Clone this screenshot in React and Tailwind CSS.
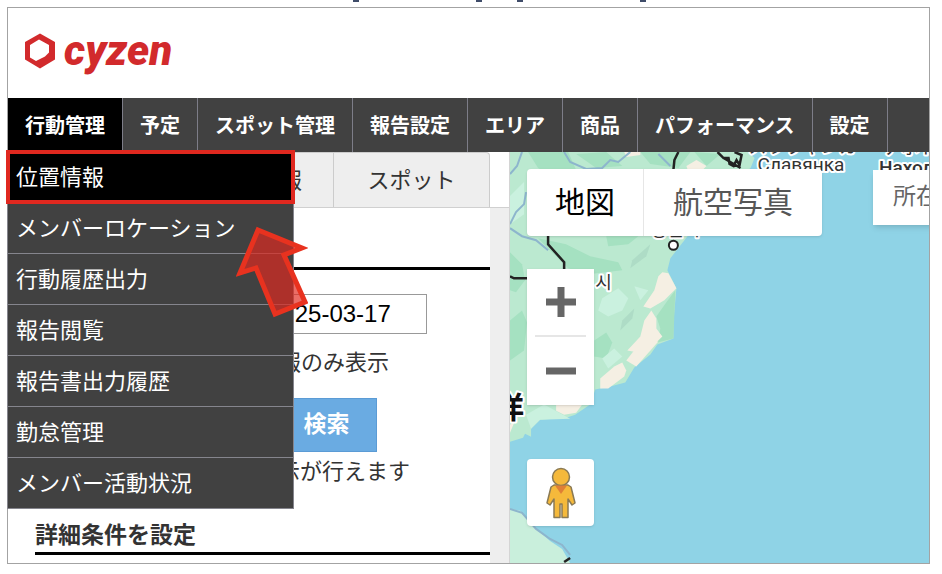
import clsx from 'clsx';

const navItems = ['行動管理', '予定', 'スポット管理', '報告設定', 'エリア', '商品', 'パフォーマンス', '設定'];

const menuItems = [
  '位置情報',
  'メンバーロケーション',
  '行動履歴出力',
  '報告閲覧',
  '報告書出力履歴',
  '勤怠管理',
  'メンバー活動状況',
];

function Logo() {
  return (
    <a href="#" className="flex items-center gap-2 pb-1 text-[#d22a2c]">
      <svg viewBox="0 0 32 36" className="h-9 w-8" aria-hidden="true">
        <path
          fill="currentColor"
          fillRule="evenodd"
          d="M16 0.5 L31 9 V26.5 L16 35.5 L1 26.5 V9 Z M15 6.5 L6 12 V24.5 L12 28 L21 23.5 L25 19.5 V12 Z"
        />
      </svg>
      <span className="font-['Roboto'] font-black italic text-[42px] leading-none">cyzen</span>
    </a>
  );
}

function GlobalNav() {
  return (
    <nav className="flex h-[54px] bg-[#414141]">
      {navItems.map((item, i) => (
        <a
          key={item}
          href="#"
          className={clsx(
            'flex shrink-0 items-center border-r border-[#7d7d88] px-[17px] pt-0.5 text-xl font-bold text-white',
            i === 0 && 'bg-black',
          )}
        >
          {item}
        </a>
      ))}
    </nav>
  );
}

function DropdownMenu() {
  return (
    <ul className="absolute -left-px top-0 z-10 w-[287px] border-x border-[#85858d] bg-[#414141] text-[22px] text-white">
      {menuItems.map((item, i) => (
        <li key={item} className="border-b border-[#85858d]">
          <a
            href="#"
            className={clsx(
              'flex h-[50px] items-center px-2',
              i === 0 && 'bg-black outline-4 -outline-offset-2 outline-[#e0281f]',
            )}
          >
            {item}
          </a>
        </li>
      ))}
    </ul>
  );
}

function Arrow() {
  return (
    <svg viewBox="0 0 72 92" className="absolute left-[228px] top-[74px] z-20 h-[92px] w-[72px]" aria-hidden="true">
      <path
        d="M22 4 L66 22 L48 29 L69 76 L39 88 L20 42 L4 47 Z"
        fill="#e0281f"
        fillOpacity="0.68"
        stroke="#e8321f"
        strokeWidth="5"
      />
    </svg>
  );
}

function SearchPanel() {
  return (
    <section className="w-[502px] shrink-0 border-r border-[#d4d4d4] text-[22px] text-[#333]">
      <div className="flex h-[56px] justify-end border-b border-[#d0d0d0] pr-[19px]">
        <button className="w-[151px] border-x border-t border-[#ccc] bg-[#eee] pl-24 text-left">報</button>
        <button className="w-[156px] rounded-tr border-r border-t border-[#ccc] bg-[#eee]">スポット</button>
      </div>
      <div className="flex h-[355px]">
        <div className="flex-1 pl-[27px]">
          <div className="h-[62px] border-b-3 border-black" />
          <form className="pt-6">
            <input
              type="text"
              aria-label="日付"
              defaultValue="2025-03-17"
              className="ml-[220px] block h-10 w-[172px] border border-[#999] bg-white px-3 font-['Liberation_Sans'] text-2xl text-black"
            />
            <label className="mt-3 flex h-8 w-[354px] items-center justify-end">
              <input type="checkbox" className="mr-5 size-4" />
              報のみ表示
            </label>
            <button
              type="button"
              className="mt-5 ml-[241px] block h-[54px] w-[101px] border border-[#5b9bd5] bg-[#6aabe2] text-[23px] font-bold text-white"
            >
              検索
            </button>
          </form>
          <p className="mt-1 w-[375px] text-right leading-8">示が行えます</p>
          <h2 className="mt-8 border-b-3 border-black text-[23px] font-bold leading-8">詳細条件を設定</h2>
        </div>
        <div className="w-[19px] bg-[#eee]" />
      </div>
    </section>
  );
}

function MapDrawing() {
  return (
    <svg viewBox="0 0 419 410" preserveAspectRatio="xMinYMin slice" className="absolute inset-0 size-full" aria-hidden="true">
      <rect width="419" height="410" fill="#8fd3e6" />
      {/* land */}
      <path
        fill="#bbe9d0"
        d="M0 0 H238 L244 6 L240 16 L222 30 L196 60 L174 88 L160 106 L157 118 L166 136 L163 170 L163 186 L147 192 L140 202 L124 215 L115 230 L100 234 L85 237 L80 252 L65 262 L56 265 L30 267 L21 276 V284 L15 281 L13 285 L0 289 Z"
      />
      <path fill="#c9efdc" d="M0 356 L10 358 L24 374 L40 388 L52 396 L60 410 H0 Z" />
      {/* woods */}
      <g fill="#a5e1c1">
        <path d="M18 0 L58 0 L66 18 L50 28 L28 16 Z" />
        <path d="M66 2 L96 0 L112 14 L86 16 Z" />
        <path d="M130 0 L180 0 L168 16 L140 12 Z" />
        <path d="M28 86 L56 92 L80 104 L108 110 L112 118 L78 122 L58 116 Z" />
        <path d="M96 84 L128 84 L118 92 L98 94 Z" />
        <path d="M0 100 L12 112 L15 128 L6 140 L0 138 Z" />
        <path d="M0 168 L12 158 L17 170 L14 198 L0 208 Z" />
        <path d="M165 138 L163 186 L147 190 L150 176 L146 164 L156 150 Z" />
        <path d="M84 188 L96 180 L102 190 L96 206 L84 204 Z" />
        <path d="M184 0 L210 2 L196 14 Z" />
      </g>
      <g fill="#caf1df">
        <path d="M92 146 L108 136 L118 146 L112 158 L98 164 L88 158 Z" />
        <path d="M0 44 L14 30 L14 62 L0 72 Z" />
        <path d="M60 266 L30 267 L21 276 L16 262 L34 252 Z" />
        <path d="M124 134 L138 138 L130 148 Z" />
        <path d="M92 206 L104 196 L112 204 L98 216 Z" />
      </g>
      <g fill="#aedcc6">
        <path d="M122 108 L140 92 L136 104 L120 116 Z" />
        <path d="M112 168 L124 156 L122 166 L110 178 Z" />
      </g>
      {/* towns and beaches */}
      <g fill="#f5efe3">
        <path d="M152 120 L158 121 L166 136 L154 148 L140 156 L133 154 L144 138 L148 124 Z" />
        <path d="M141 158 L146 166 L146 176 L152 184 L140 196 L128 200 L117 198 L130 184 L134 168 Z" />
        <path d="M104 214 L112 210 L116 218 L114 224 L98 236 L90 236 L90 226 Z" />
        <path d="M130 190 L148 189 L126 214 L116 208 Z" />
        <path d="M46 252 H72 L66 260 L54 262 L46 258 Z" />
        <path d="M176 14 L186 8 L196 14 L190 20 L178 20 Z" />
        <path d="M114 0 H130 V3 L116 5 Z" />
        <path d="M0 272 L5 268 L0 280 Z" />
      </g>
      {/* rivers */}
      <g fill="none" stroke="#8db5cd" strokeWidth="2">
        <path d="M0 22 L7 14 L12 0" />
        <path d="M54 0 L60 10 L76 17 L92 16 L100 8 L108 10 L120 0" />
        <path d="M0 72 L6 60 L14 52 L16 40" />
        <path d="M0 76 L12 84 L26 88 L38 98" />
        <path d="M148 2 L160 14" />
        <path d="M0 356 L12 360 L26 376 L40 386 L52 392 L60 402" />
      </g>
      {/* borders */}
      <g fill="none" stroke="#222" strokeWidth="2.5">
        <path d="M38 80 V92 L54 110 V120 L52 126 H4 L0 124" />
        <path d="M168 0 L164 8 L163 18" />
        <path d="M207 0 L213 6 L218 6 L219 12 L223 14 L226 8 L229 13 L231 3 L224 0 M213 6 L230 16" />
        <path d="M54 409 L60 405" />
      </g>
      <g
        fill="#333"
        stroke="#fff"
        strokeWidth="4"
        strokeLinejoin="round"
        paintOrder="stroke"
        fontFamily="'Roboto', 'Noto Sans CJK JP', 'Noto Sans CJK KR', sans-serif"
      >
        <text x="238" y="1" fontSize="18">スラヴャンカ</text>
        <text x="247" y="19" fontSize="19">Славянка</text>
        <text x="372" y="2" fontSize="18">ナホトカ</text>
        <text x="368" y="22" fontSize="19" fontWeight="500">Находка</text>
        <text x="140" y="84" fontSize="18">청진시</text>
        <text x="85" y="137" fontSize="18">시</text>
        <text x="-16" y="265" fontSize="30" fontWeight="700" fill="#111">洋</text>
      </g>
      <circle cx="163" cy="93" r="4.5" fill="#fff" stroke="#222" strokeWidth="2" />
    </svg>
  );
}

function Pegman() {
  return (
    <svg viewBox="0 0 30 52" className="h-[52px] w-[30px]" aria-hidden="true">
      <path
        d="M8 18 H22 L25 20 L29 36 L26 38 L22 32 V50.5 H16 V37 H14 V50.5 H8 V32 L4 38 L1 36 L5 20 Z"
        fill="#f5b93b"
        stroke="#8a7a55"
        strokeWidth="1.5"
        strokeLinejoin="round"
      />
      <circle cx="15" cy="10" r="8.5" fill="#f5b93b" stroke="#8a7a55" strokeWidth="1.5" />
      <path d="M9 18.5 H21 L15 27 Z" fill="#df7f35" />
    </svg>
  );
}

function MapPanel() {
  return (
    <section className="relative min-w-0 flex-1 overflow-hidden">
      <MapDrawing />
      <div className="absolute left-[17px] top-[17px] flex h-[67px] rounded-sm bg-white text-3xl shadow">
        <button className="w-[117px] border-r border-[#e6e6e6] text-black">地図</button>
        <button className="w-[178px] text-[#565656]">航空写真</button>
      </div>
      <div className="absolute left-[363px] top-[18px] flex h-[55px] w-40 items-center bg-white pl-5 text-[23px] text-[#666] shadow-md">
        所在
      </div>
      <div className="absolute left-[17px] top-[117px] w-[67px] bg-white px-2 shadow">
        <button aria-label="拡大" className="flex h-[68px] w-full items-center justify-center border-b-2 border-[#e6e6e6]">
          <svg viewBox="0 0 30 30" className="size-[30px]">
            <path d="M11.5 0 h7 v11.5 h11.5 v7 h-11.5 v11.5 h-7 v-11.5 h-11.5 v-7 h11.5 Z" fill="#666" />
          </svg>
        </button>
        <button aria-label="縮小" className="flex h-[68px] w-full items-center justify-center">
          <svg viewBox="0 0 30 30" className="size-[30px]">
            <path d="M0 11.5 h30 v7 h-30 Z" fill="#666" />
          </svg>
        </button>
      </div>
      <button
        aria-label="ストリートビュー"
        className="absolute left-[17px] top-[307px] flex size-[67px] items-center justify-center rounded-sm bg-white shadow"
      >
        <Pegman />
      </button>
    </section>
  );
}

export default function App() {
  return (
    <div className="bg-white pb-[11px] font-['Roboto','Noto_Sans_CJK_JP',sans-serif]">
      <div className="flex h-[7px] items-start pl-[353px]">
        <span className="mr-[117px] h-0.5 w-1.5 bg-[#3f4c69]" />
        <span className="mr-[35px] h-0.5 w-1.5 bg-[#3f4c69]" />
        <span className="mr-[117px] h-0.5 w-1.5 bg-[#3f4c69]" />
        <span className="h-0.5 w-1.5 bg-[#3f4c69]" />
      </div>
      <div className="mr-[12px] ml-[7px] border border-[#a3a3a3]">
        <header className="flex h-[90px] items-center px-4">
          <Logo />
        </header>
        <GlobalNav />
        <main className="relative flex">
          <DropdownMenu />
          <Arrow />
          <SearchPanel />
          <MapPanel />
        </main>
      </div>
    </div>
  );
}
